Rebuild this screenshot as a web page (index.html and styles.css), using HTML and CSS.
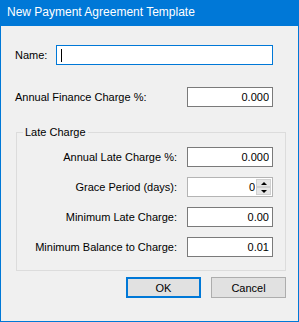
FILE: index.html
```html
<!DOCTYPE html>
<html lang="en">
<head>
    <meta charset="UTF-8">
    <meta name="viewport" content="width=device-width, initial-scale=1.0">
    <title>New Payment Agreement Template</title>
    <link rel="stylesheet" href="styles.css">
</head>
<body>
    <div class="window">
        <div class="titlebar">New Payment Agreement Template</div>

        <div class="content">
            <div class="row name-row">
                <label for="name">Name:</label>
                <input type="text" id="name" class="field focused">
                <span class="caret"></span>
            </div>

            <div class="row finance-row">
                <label for="finance">Annual Finance Charge %:</label>
                <input type="text" id="finance" class="field num" value="0.000">
            </div>

            <fieldset class="group">
                <legend>Late Charge</legend>
                <div class="group-grid">
                    <label for="lateCharge">Annual Late Charge %:</label>
                    <input type="text" id="lateCharge" class="field num" value="0.000">

                    <label for="grace">Grace Period (days):</label>
                    <div class="spinner">
                        <input type="text" id="grace" class="num" value="0">
                        <div class="spin-buttons">
                            <span class="spin up"></span>
                            <span class="spin down"></span>
                        </div>
                    </div>

                    <label for="minLate">Minimum Late Charge:</label>
                    <input type="text" id="minLate" class="field num" value="0.00">

                    <label for="minBalance">Minimum Balance to Charge:</label>
                    <input type="text" id="minBalance" class="field num" value="0.01">
                </div>
            </fieldset>

            <div class="buttons">
                <button type="submit" class="btn default">OK</button>
                <button type="button" class="btn">Cancel</button>
            </div>
        </div>
    </div>
</body>
</html>
```

FILE: styles.css
```css
body {
    margin: 0;
    font-family: "Liberation Sans", Arial, sans-serif;
    font-size: 11px;
    color: #000;
    background: #fff;
}

.window {
    width: 299px;
    height: 322px;
    box-sizing: border-box;
    border: 1px solid #0078d7;
    border-top: none;
    background-color: #f0f0f0;
}

.titlebar {
    height: 26px;
    margin: 0 -1px;
    padding-left: 7px;
    background-color: #0078d7;
    color: #fff;
    font-size: 12px;
    line-height: 25px;
}

.content {
    padding: 19px 0 0 14px;
}

.row {
    display: flex;
    align-items: center;
    height: 20px;
    padding-right: 25px;
}

.name-row {
    position: relative;
    gap: 9px;
}

.name-row .field {
    flex: 1;
}

.caret {
    position: absolute;
    left: 46px;
    top: 4px;
    width: 1px;
    height: 13px;
    background: #000;
}

.finance-row {
    justify-content: space-between;
    margin-top: 22px;
}

.field {
    height: 20px;
    box-sizing: border-box;
    border: 1px solid #7a7a7a;
    background: #fff;
    font: inherit;
    padding: 0 3px;
    outline: none;
}

.field.focused {
    border-color: #0078d7;
}

.num {
    width: 86px;
    text-align: right;
}

.group {
    margin: 19px 0 0 1px;
    width: 270px;
    box-sizing: border-box;
    border: 1px solid #dcdcdc;
    padding: 9px 12px 13px 0;
}

.group legend {
    margin-left: 6px;
    padding: 0 2px;
}

.group-grid {
    display: grid;
    grid-template-columns: 1fr 86px;
    column-gap: 10px;
    row-gap: 10px;
    align-items: center;
}

.group-grid label {
    text-align: right;
}

.spinner {
    display: flex;
    height: 20px;
    box-sizing: border-box;
    border: 1px solid #b4b4b4;
    background: #fff;
}

.spinner input {
    flex: 1;
    min-width: 0;
    border: none;
    padding: 0 1px 0 0;
    font: inherit;
    outline: none;
    background: transparent;
}

.spin-buttons {
    display: flex;
    flex-direction: column;
    width: 15px;
    padding: 1px 1px 1px 0;
}

.spin {
    flex: 1;
    position: relative;
    background: #e6e6e6;
    border: 1px solid #d0d0d0;
}

.spin::after {
    content: "";
    position: absolute;
    left: 4px;
    top: 2px;
    border-left: 3px solid transparent;
    border-right: 3px solid transparent;
}

.spin.up::after {
    border-bottom: 3px solid #000;
}

.spin.down::after {
    border-top: 3px solid #000;
}

.buttons {
    display: flex;
    justify-content: flex-end;
    gap: 10px;
    margin-top: 6px;
    padding-right: 12px;
}

.btn {
    width: 75px;
    height: 21px;
    box-sizing: border-box;
    background-color: #e1e1e1;
    border: 1px solid #adadad;
    font: inherit;
    color: #000;
    padding: 0;
}

.btn.default {
    border: 2px solid #0078d7;
}
```
